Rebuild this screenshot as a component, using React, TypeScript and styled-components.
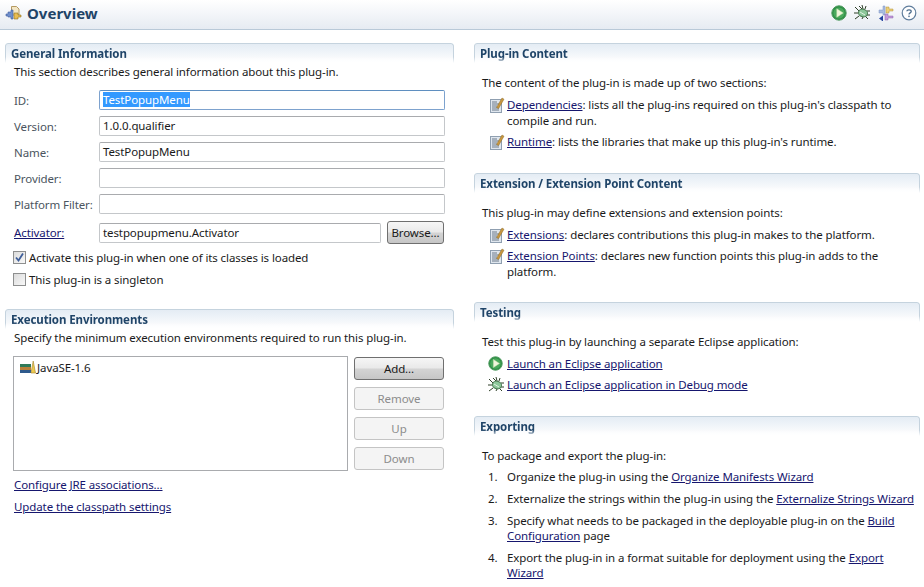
import React from 'react'
import styled, { createGlobalStyle } from 'styled-components'

const GlobalStyle = createGlobalStyle`
  html, body {
    margin: 0;
    padding: 0;
    background: #fff;
  }
  body {
    font-family: 'Noto Sans', 'Open Sans', sans-serif;
    font-size: 11.5px;
    letter-spacing: -0.1px;
    color: #1a1a1a;
  }
`

const Page = styled.div`
  width: 924px;
  height: 587px;
  overflow: hidden;
  background: #fff;
`

const Header = styled.header`
  height: 30px;
  box-sizing: border-box;
  padding: 0 7px 3px 5px;
  display: flex;
  align-items: center;
  gap: 5px;
  background: linear-gradient(#ffffff, #e6ebf2);
  border-bottom: 1px solid #b9c9d8;
`

const Title = styled.h1`
  margin: 0;
  flex: 1;
  font-size: 15px;
  letter-spacing: 0;
  font-weight: 700;
  color: #1f4468;
`

const Tools = styled.div`
  display: flex;
  align-items: center;
  gap: 7px;
`

const Columns = styled.div`
  display: grid;
  grid-template-columns: 449px 446px;
  column-gap: 20px;
  padding: 13px 4px 0 5px;
`

const Column = styled.div`
  display: flex;
  flex-direction: column;
`

const Section = styled.section<{ $height: number }>`
  height: ${p => p.$height}px;
`

const SectionHead = styled.h2`
  margin: 0;
  height: 20px;
  box-sizing: border-box;
  padding: 1px 5px 0;
  font-size: 11.5px;
  line-height: 17px;
  font-weight: 700;
  color: #1f4468;
  border: 1px solid #c5d3de;
  border-bottom: 0;
  border-radius: 3px 3px 0 0;
  background: linear-gradient(#e4ecf4, #ffffff);
  -webkit-mask-image: linear-gradient(#000 70%, transparent);
`

const LeftIntro = styled.p`
  margin: 0;
  padding-left: 9px;
  height: 21px;
  line-height: 17px;
`

const Fields = styled.div`
  padding: 6px 9px 0;
  display: flex;
  flex-direction: column;
  gap: 6px;
`

const Row = styled.div`
  display: grid;
  grid-template-columns: 85px 1fr auto;
  align-items: center;
  height: 20px;
`

const Label = styled.label`
  color: #4b5560;
`

const Field = styled.div<{ $focus?: boolean }>`
  height: 20px;
  box-sizing: border-box;
  padding-left: 3px;
  line-height: 18px;
  border: 1px solid ${p => (p.$focus ? '#7da2ce' : '#c4c7ca')};
  border-top-color: ${p => (p.$focus ? '#5f8fc0' : '#a9abae')};
  border-radius: 2px;
  background: #fff;
`

const Selected = styled.span`
  background: #3399ff;
  color: #fff;
`

const Button = styled.button<{ $off?: boolean }>`
  width: 100%;
  height: 23px;
  padding: 0;
  font: inherit;
  letter-spacing: inherit;
  color: ${p => (p.$off ? '#8c8c8c' : '#1a1a1a')};
  border: 1px solid ${p => (p.$off ? '#c4c4c4' : '#6f6f6f')};
  border-radius: 3px;
  background: ${p =>
    p.$off
      ? '#f4f4f4'
      : 'linear-gradient(#f6f6f6 0%, #e9e9e9 48%, #d4d4d4 52%, #c6c6c6 100%)'};
`

const ActivatorRow = styled(Row)`
  height: 23px;
  margin-top: 1px;
  grid-template-columns: 85px 282px 57px;
  & > button {
    margin-left: 6px;
  }
`

const Checks = styled.div`
  padding: 2px 9px 0 8px;
`

const CheckRow = styled.div`
  height: 22px;
  display: flex;
  align-items: center;
  gap: 3px;
`

const Box = styled.span`
  width: 11px;
  height: 11px;
  display: inline-flex;
  border: 1px solid #8e8f8f;
  background: linear-gradient(135deg, #dcdcdc, #f8f8f8);
`

const Link = styled.a`
  color: #16166e;
  text-decoration: underline;
`

const EnvBody = styled.div`
  margin-top: 6px;
  padding: 0 10px 0 8px;
  display: grid;
  grid-template-columns: 335px 90px;
  column-gap: 6px;
`

const List = styled.div`
  height: 115px;
  box-sizing: border-box;
  padding: 3px 5px;
  border: 1px solid #a9abae;
  display: flex;
  align-items: flex-start;
  gap: 1px;
  line-height: 16px;
`

const ButtonStack = styled.div`
  padding-top: 1px;
  display: flex;
  flex-direction: column;
  gap: 7px;
`

const FootLinks = styled.div`
  margin-top: 3px;
  padding-left: 9px;
  display: flex;
  flex-direction: column;
  line-height: 22px;
`

const Intro = styled.p`
  margin: 0;
  padding: 11px 0 0 8px;
  line-height: 17px;
`

const Items = styled.div`
  padding: 6px 0 0 16px;
  display: flex;
  flex-direction: column;
  gap: 5px;
`

const Item = styled.div<{ $lead?: boolean }>`
  display: grid;
  grid-template-columns: ${p => (p.$lead ? '19px' : '17px')} 1fr;
  margin-left: ${p => (p.$lead ? '-2px' : '0')};
  line-height: 16px;
`

const Steps = styled.ol`
  margin: 0;
  padding: 5px 4px 0 33px;
  display: flex;
  flex-direction: column;
  gap: 7px;
  list-style: none;
  counter-reset: step;
`

const Step = styled.li`
  counter-increment: step;
  position: relative;
  line-height: 15px;
  &::before {
    content: counter(step) '.';
    position: absolute;
    left: -19px;
  }
`

const PluginIcon = () => (
  <svg width="17" height="17" viewBox="0 0 17 17">
    <path d="M6.5 1.5h5l2.5 2.5v6h-7.5z" fill="#f3e6c4" stroke="#b59a62" />
    <path d="M1 9h2V7h3V5h2v9H6v-2H3v-1H1z" fill="#6f8fcc" stroke="#3f5ea0" strokeWidth="0.6" />
    <path d="M9 8h4v2h3v2h-3v2H9z" fill="#e8bc52" stroke="#96721f" strokeWidth="0.6" />
  </svg>
)

const RunIcon = ({ size = 16 }: { size?: number }) => (
  <svg width={size} height={size} viewBox="0 0 16 16">
    <circle cx="8" cy="8" r="7.2" fill="#2f8f45" stroke="#4f9a60" />
    <circle cx="8" cy="8" r="5.6" fill="#4aa95d" />
    <path d="M5.8 3.8l6.4 4.2-6.4 4.2z" fill="#f0f6dc" stroke="#d4e6b4" strokeWidth="0.5" />
  </svg>
)

const BugIcon = () => (
  <svg width="17" height="16" viewBox="0 0 17 16">
    <path
      d="M1 2l4 4M0 8h4M1 14l4-3M5 1l3 3M8 0l1 4M12 1l-1 3M16 6h-3M16 10l-3 0M14 14l-3-3M8 14l1-2"
      stroke="#2e3f28"
      strokeWidth="1"
      fill="none"
    />
    <ellipse cx="9" cy="8" rx="4.6" ry="3.8" fill="#8cc79a" stroke="#4a7a52" transform="rotate(20 9 8)" />
    <path d="M6 7l5 3" stroke="#e0f0e0" />
  </svg>
)

const ExportIcon = () => (
  <svg width="16" height="16" viewBox="0 0 16 16">
    <path d="M1 5h4V1h2v9H5V8H1z" fill="#a9bce0" stroke="#7f95c4" strokeWidth="0.5" />
    <path d="M8 2h3v2h4v2h-4v2H8z" fill="#ecd078" stroke="#b2913a" strokeWidth="0.5" />
    <path d="M1 13.5l4-3v6z" fill="#2343a0" />
    <path d="M7 9h3v2h5v2h-5v2H7z" fill="#c49bdc" stroke="#8f66ae" strokeWidth="0.5" />
  </svg>
)

const HelpIcon = () => (
  <svg width="16" height="16" viewBox="0 0 16 16">
    <circle cx="8" cy="8" r="6.8" fill="#fff" stroke="#5f7d9c" strokeWidth="1.2" />
    <path d="M5.8 6.2C6 4.4 10.2 4.4 10.2 6.4 10.2 8 8 7.8 8 9.6" fill="none" stroke="#4d6d8d" strokeWidth="1.3" />
    <rect x="7.3" y="10.6" width="1.4" height="1.5" fill="#4d6d8d" />
  </svg>
)

const PageIcon = () => (
  <svg width="15" height="16" viewBox="0 0 15 16">
    <rect x="0.5" y="2.5" width="11" height="13" fill="#dfe6ee" stroke="#8f9fb0" />
    <path d="M2 5h5M2 7h7M2 9h5M2 11h7M2 13h7" stroke="#6d7b8a" />
    <path d="M6.5 10.5L12 1l2 1.2-5.4 9.3z" fill="#c9973e" stroke="#8b6a2a" strokeWidth="0.5" />
  </svg>
)

const JreIcon = () => (
  <svg width="17" height="14" viewBox="0 0 17 14">
    <rect x="1" y="4" width="11" height="3" fill="#2f7a58" />
    <rect x="1" y="7" width="11" height="3" fill="#b9803a" />
    <rect x="1" y="10" width="11" height="3" fill="#2f5a8c" />
    <path d="M12 13l2.2-12 2.3 12z" fill="#ecc94f" stroke="#a5852c" strokeWidth="0.6" />
  </svg>
)

const CheckMark = () => (
  <svg width="11" height="11" viewBox="0 0 11 11">
    <path d="M2 5.5l2.5 3L9 1.5" fill="none" stroke="#3f5f9a" strokeWidth="1.8" />
  </svg>
)

export default function App() {
  return (
    <Page>
      <GlobalStyle />
      <Header>
        <PluginIcon />
        <Title>Overview</Title>
        <Tools>
          <RunIcon />
          <BugIcon />
          <ExportIcon />
          <HelpIcon />
        </Tools>
      </Header>
      <Columns>
        <Column>
          <Section $height={266}>
            <SectionHead>General Information</SectionHead>
            <LeftIntro>This section describes general information about this plug-in.</LeftIntro>
            <Fields>
              <Row>
                <Label>ID:</Label>
                <Field $focus><Selected>TestPopupMenu</Selected></Field>
              </Row>
              <Row>
                <Label>Version:</Label>
                <Field>1.0.0.qualifier</Field>
              </Row>
              <Row>
                <Label>Name:</Label>
                <Field>TestPopupMenu</Field>
              </Row>
              <Row>
                <Label>Provider:</Label>
                <Field />
              </Row>
              <Row>
                <Label>Platform Filter:</Label>
                <Field />
              </Row>
              <ActivatorRow>
                <Link>Activator:</Link>
                <Field>testpopupmenu.Activator</Field>
                <Button>Browse...</Button>
              </ActivatorRow>
            </Fields>
            <Checks>
              <CheckRow>
                <Box><CheckMark /></Box>
                Activate this plug-in when one of its classes is loaded
              </CheckRow>
              <CheckRow>
                <Box />
                This plug-in is a singleton
              </CheckRow>
            </Checks>
          </Section>
          <Section $height={220}>
            <SectionHead>Execution Environments</SectionHead>
            <LeftIntro>Specify the minimum execution environments required to run this plug-in.</LeftIntro>
            <EnvBody>
              <List><JreIcon />JavaSE-1.6</List>
              <ButtonStack>
                <Button>Add...</Button>
                <Button $off>Remove</Button>
                <Button $off>Up</Button>
                <Button $off>Down</Button>
              </ButtonStack>
            </EnvBody>
            <FootLinks>
              <div><Link>Configure JRE associations...</Link></div>
              <div><Link>Update the classpath settings</Link></div>
            </FootLinks>
          </Section>
        </Column>
        <Column>
          <Section $height={130}>
            <SectionHead>Plug-in Content</SectionHead>
            <Intro>The content of the plug-in is made up of two sections:</Intro>
            <Items>
              <Item>
                <PageIcon />
                <span><Link>Dependencies</Link>: lists all the plug-ins required on this plug-in's classpath to compile and run.</span>
              </Item>
              <Item>
                <PageIcon />
                <span><Link>Runtime</Link>: lists the libraries that make up this plug-in's runtime.</span>
              </Item>
            </Items>
          </Section>
          <Section $height={129}>
            <SectionHead>Extension / Extension Point Content</SectionHead>
            <Intro>This plug-in may define extensions and extension points:</Intro>
            <Items>
              <Item>
                <PageIcon />
                <span><Link>Extensions</Link>: declares contributions this plug-in makes to the platform.</span>
              </Item>
              <Item>
                <PageIcon />
                <span><Link>Extension Points</Link>: declares new function points this plug-in adds to the platform.</span>
              </Item>
            </Items>
          </Section>
          <Section $height={114}>
            <SectionHead>Testing</SectionHead>
            <Intro>Test this plug-in by launching a separate Eclipse application:</Intro>
            <Items>
              <Item $lead>
                <RunIcon size={15} />
                <span><Link>Launch an Eclipse application</Link></span>
              </Item>
              <Item $lead>
                <BugIcon />
                <span><Link>Launch an Eclipse application in Debug mode</Link></span>
              </Item>
            </Items>
          </Section>
          <Section $height={170}>
            <SectionHead>Exporting</SectionHead>
            <Intro>To package and export the plug-in:</Intro>
            <Steps>
              <Step>Organize the plug-in using the <Link>Organize Manifests Wizard</Link></Step>
              <Step>Externalize the strings within the plug-in using the <Link>Externalize Strings Wizard</Link></Step>
              <Step>Specify what needs to be packaged in the deployable plug-in on the <Link>Build Configuration</Link> page</Step>
              <Step>Export the plug-in in a format suitable for deployment using the <Link>Export Wizard</Link></Step>
            </Steps>
          </Section>
        </Column>
      </Columns>
    </Page>
  )
}
